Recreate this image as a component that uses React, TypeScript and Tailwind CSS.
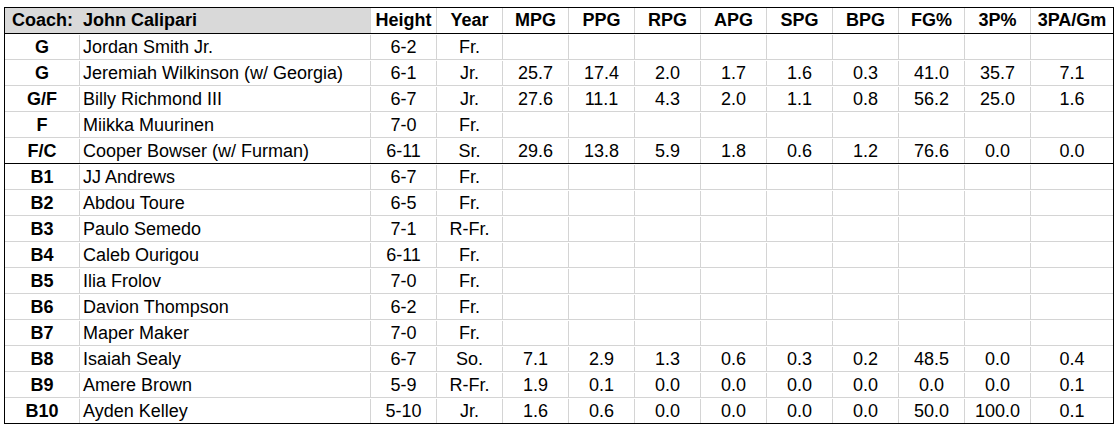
import React from "react";

type Row = { pos: string; name: string; ht: string; yr: string; stats: string[] };

const blank = ["", "", "", "", "", "", "", "", ""];

const rows: Row[] = [
  { pos: "G", name: "Jordan Smith Jr.", ht: "6-2", yr: "Fr.", stats: blank },
  { pos: "G", name: "Jeremiah Wilkinson (w/ Georgia)", ht: "6-1", yr: "Jr.", stats: ["25.7", "17.4", "2.0", "1.7", "1.6", "0.3", "41.0", "35.7", "7.1"] },
  { pos: "G/F", name: "Billy Richmond III", ht: "6-7", yr: "Jr.", stats: ["27.6", "11.1", "4.3", "2.0", "1.1", "0.8", "56.2", "25.0", "1.6"] },
  { pos: "F", name: "Miikka Muurinen", ht: "7-0", yr: "Fr.", stats: blank },
  { pos: "F/C", name: "Cooper Bowser (w/ Furman)", ht: "6-11", yr: "Sr.", stats: ["29.6", "13.8", "5.9", "1.8", "0.6", "1.2", "76.6", "0.0", "0.0"] },
  { pos: "B1", name: "JJ Andrews", ht: "6-7", yr: "Fr.", stats: blank },
  { pos: "B2", name: "Abdou Toure", ht: "6-5", yr: "Fr.", stats: blank },
  { pos: "B3", name: "Paulo Semedo", ht: "7-1", yr: "R-Fr.", stats: blank },
  { pos: "B4", name: "Caleb Ourigou", ht: "6-11", yr: "Fr.", stats: blank },
  { pos: "B5", name: "Ilia Frolov", ht: "7-0", yr: "Fr.", stats: blank },
  { pos: "B6", name: "Davion Thompson", ht: "6-2", yr: "Fr.", stats: blank },
  { pos: "B7", name: "Maper Maker", ht: "7-0", yr: "Fr.", stats: blank },
  { pos: "B8", name: "Isaiah Sealy", ht: "6-7", yr: "So.", stats: ["7.1", "2.9", "1.3", "0.6", "0.3", "0.2", "48.5", "0.0", "0.4"] },
  { pos: "B9", name: "Amere Brown", ht: "5-9", yr: "R-Fr.", stats: ["1.9", "0.1", "0.0", "0.0", "0.0", "0.0", "0.0", "0.0", "0.1"] },
  { pos: "B10", name: "Ayden Kelley", ht: "5-10", yr: "Jr.", stats: ["1.6", "0.6", "0.0", "0.0", "0.0", "0.0", "50.0", "100.0", "0.1"] },
];

const statHeads = ["MPG", "PPG", "RPG", "APG", "SPG", "BPG", "FG%", "3P%", "3PA/Gm"];

export default function App() {
  return (
    <div
      className="bg-white w-[1117px] h-[427px] pt-[7px] pl-[4px] text-black text-[18px]"
      style={{ fontFamily: '"Liberation Sans", Arial, sans-serif' }}
    >
      <div className="w-[1110px] border border-black box-border">
        {/* header */}
        <div className="flex h-[26px] border-b border-black font-bold leading-[25px]">
          <div className="flex w-[366px] bg-[#d9d9d9] border-r border-[#d4d4d4]">
            <div className="w-[75px] text-center">Coach:</div>
            <div className="flex-1 pl-[3px]">John Calipari</div>
          </div>
          <div className="w-[66px] text-center border-r border-[#d4d4d4]">Height</div>
          <div className="w-[66px] text-center border-r border-[#d4d4d4]">Year</div>
          {statHeads.map((h, i) => (
            <div
              key={h}
              className={
                i === statHeads.length - 1
                  ? "w-[82px] text-center whitespace-nowrap"
                  : "w-[66px] text-center border-r border-[#d4d4d4]"
              }
            >
              {h}
            </div>
          ))}
        </div>
        {rows.map((r, idx) => {
          const last = idx === rows.length - 1;
          const rowBorder = last
            ? "h-[25px]"
            : idx === 4
            ? "h-[26px] border-b border-black"
            : "h-[26px] border-b border-[#d4d4d4]";
          return (
            <div key={idx} className={`flex pt-[1px] leading-[24px] ${rowBorder}`}>
              <div className="w-[75px] text-center font-bold border-r border-[#d4d4d4]">{r.pos}</div>
              <div className="w-[291px] pl-[3px] border-r border-[#d4d4d4] whitespace-nowrap">{r.name}</div>
              <div className="w-[66px] text-center border-r border-[#d4d4d4]">{r.ht}</div>
              <div className="w-[66px] text-center border-r border-[#d4d4d4]">{r.yr}</div>
              {r.stats.map((s, i) => (
                <div
                  key={i}
                  className={
                    i === r.stats.length - 1
                      ? "w-[82px] text-center"
                      : "w-[66px] text-center border-r border-[#d4d4d4]"
                  }
                >
                  {s}
                </div>
              ))}
            </div>
          );
        })}
      </div>
    </div>
  );
}
